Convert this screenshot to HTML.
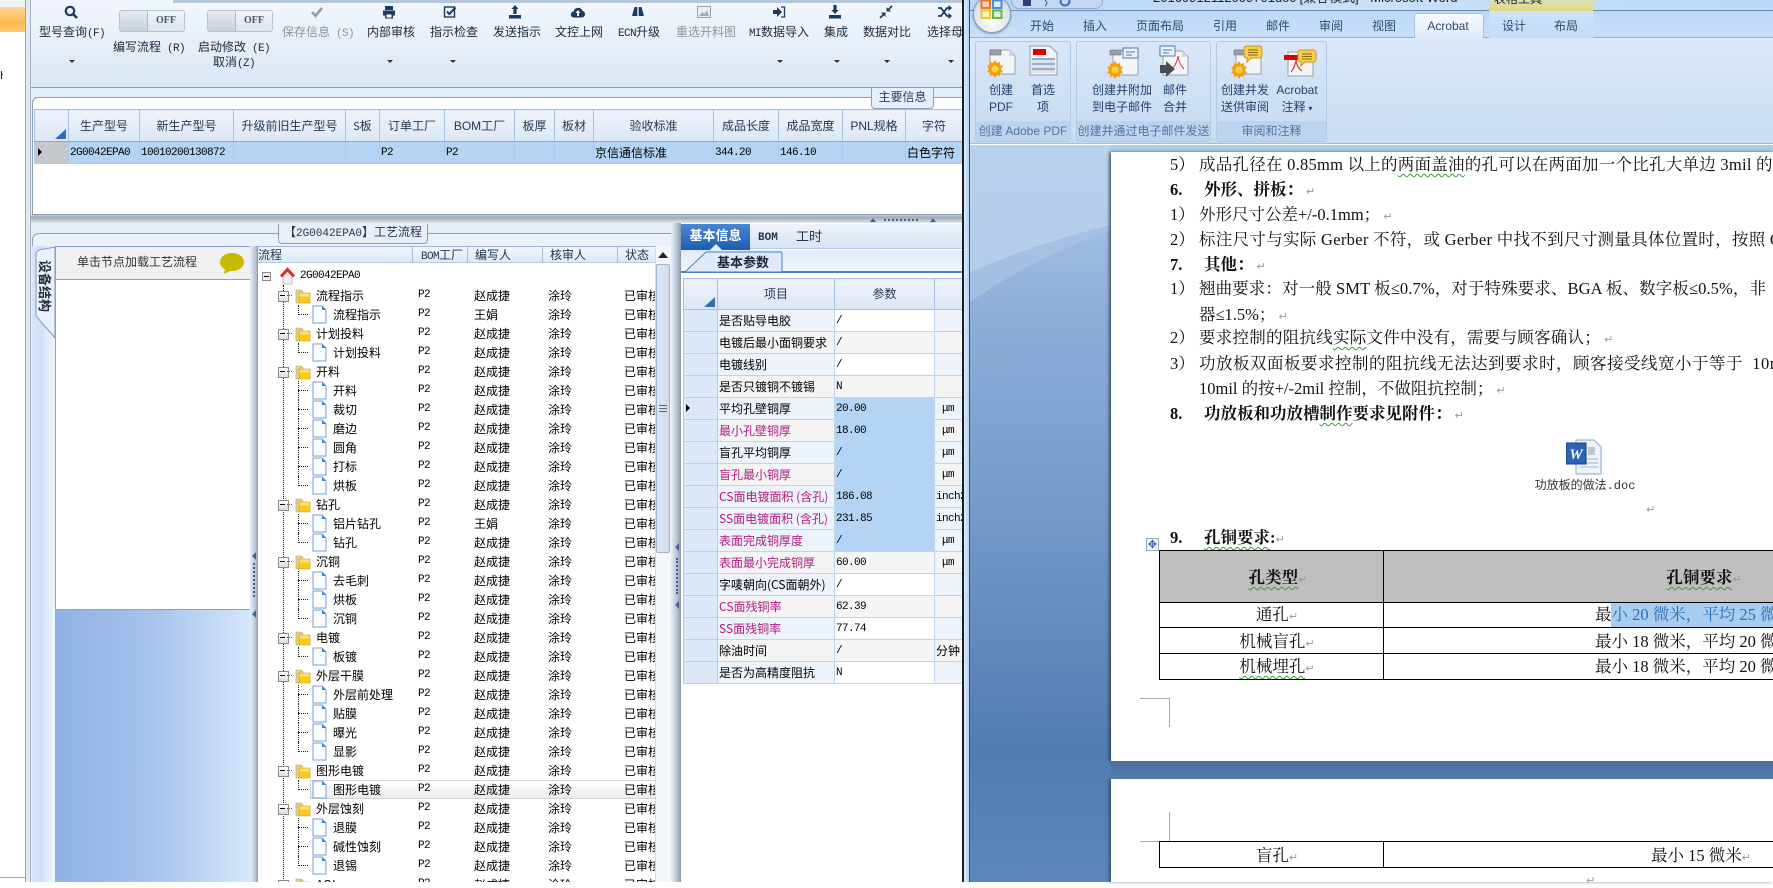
<!DOCTYPE html>
<html lang="zh"><head><meta charset="utf-8"><title>MI</title>
<style>
html,body{margin:0;padding:0}
body{position:relative;width:1773px;height:882px;overflow:hidden;background:#fff;font:12px/14px "WenQuanYi Zen Hei","Noto Sans CJK SC",sans-serif;color:#000}
div,span,svg{box-sizing:border-box}
.a{position:absolute}
.t{position:absolute;transform:translateX(-50%);white-space:nowrap;height:14px;line-height:14px;color:#1b2a3c}
.g{color:#8f959c}
.m{font-family:"Liberation Mono",monospace;font-size:11px;letter-spacing:-.6px}
.ar{position:absolute;top:60px;width:0;height:0;border:3px solid transparent;border-top:3px solid #333;border-bottom:0}
.sw{position:absolute;top:10px;width:66px;height:22px;border:1px solid #b4c4d6;border-radius:3px;background:linear-gradient(#eef3f8,#dbe5f0);font:bold 10px/20px "Liberation Serif",serif;color:#4a5a6a;text-align:right;padding-right:8px}
.sw i{position:absolute;left:0;top:0;width:27px;height:20px;background:linear-gradient(#e4e9ee,#c8d2dc);border-right:1px solid #a9b9c9;border-radius:2px}
.ti{position:absolute;top:5px;width:14px;height:14px;overflow:visible}
table{border-collapse:collapse;table-layout:fixed;position:absolute;font-size:12px}
td,th{border:1px solid #c2d4ea;padding:0;white-space:nowrap;overflow:hidden;font-weight:normal}
#g1 th{height:31px;background:linear-gradient(#edf3fb,#dbe7f6);text-align:center;color:#2a3a4c;border-color:#a7c0de;border-bottom-color:#8eaacd}
#g1 td{height:21px;background:#b3d4f4;border-color:#a8cbee;padding-left:1px}
#g2 th{height:30px;background:linear-gradient(#edf3fb,#dbe7f6);text-align:center;color:#2a3a4c;border-color:#a7c0de}
#g2 td{height:21px;padding-left:1px}
#g2 td:first-child{background:#dce8f7;border-color:#b7cce6}
.k{background:#edf3fb}.x{background:#f4f4f4}
.w{background:#fff}.y{background:#f5f5f5}.s{background:#b3d4f4}.z{background:#f2f2f2}.q{background:#edf3fb}
.v{color:#b01c80}
.tree{position:absolute;left:258px;top:263px;width:397px;height:619px;background:#fff;overflow:hidden;padding-top:4px}
.r{position:relative;height:19px;line-height:19px;white-space:nowrap}
.r span{position:absolute;top:0}
.r .n1{left:160px;font:11px/19px "Liberation Mono",monospace;letter-spacing:-.6px}.r .n2{left:216px}.r .n3{left:290px}.r .n4{left:366px}
.f .lb{left:58px}.d .lb{left:75px}
.f svg{position:absolute;left:37px;top:1px;width:16px;height:17px}
.d svg{position:absolute;left:54px;top:0;width:15px;height:19px}
.f .b{position:absolute;left:20px;top:5px;width:9px;height:9px;border:1px solid #8a8a8a;background:linear-gradient(#fff,#ddd)}
.f .b:after{content:"";position:absolute;left:1px;top:3px;width:5px;height:1px;background:#000}
.f .h{position:absolute;left:29px;top:9px;width:5px;border-top:1px dotted #555}
.d .c{position:absolute;left:40px;top:0;height:19px;border-left:1px dotted #222}
.d .e{position:absolute;left:40px;top:9px;width:10px;border-top:1px dotted #222}
.l .c{height:10px}
.hl{background:linear-gradient(#fff,#ebebeb)}
.wt{position:absolute;white-space:nowrap;font:16.5px/22px "Liberation Serif","Noto Serif CJK SC",serif;color:#111}
.wb{font-weight:bold}
.ls{letter-spacing:.25px}
.p{color:#999;font:11px/14px "DejaVu Sans",sans-serif;margin-left:3px}
.tp{margin-left:0}
.sq{text-decoration:underline wavy #3a9a3a 1px;text-underline-offset:3px}
.tab{position:absolute;top:19px;transform:translateX(-50%);white-space:nowrap;line-height:14px;color:#2c4a73}
.rg{position:absolute;top:41px;height:101px;border:1px solid #b3cae6;border-radius:3px;background:linear-gradient(#d9e7f8,#c6daf1)}
.rg b{position:absolute;left:0;right:0;bottom:0;height:20px;background:#bdd4ef;font-weight:normal;text-align:center;line-height:20px;color:#55749e;white-space:nowrap;overflow:hidden}
.rt{position:absolute;transform:translateX(-50%);white-space:nowrap;line-height:14px;color:#24426b}
.rl{position:absolute;background:#aaa}
</style></head><body>

<!-- far left window -->
<div class="a" style="left:0;top:0;width:25px;height:882px;background:#fff"></div>
<div class="a" style="left:0;top:0;width:25px;height:7px;background:#eef0f2"></div>
<div class="a" style="left:0;top:7px;width:25px;height:25px;background:linear-gradient(#ffd79a,#fdb94f 60%,#ffc873)"></div>
<div class="a" style="left:0;top:70px;font-size:10px;line-height:10px;width:3px;overflow:hidden">h</div>
<div class="a" style="left:0;top:877px;width:25px;height:1px;background:#9aa"></div>
<div class="a" style="left:25px;top:0;width:6px;height:882px;background:#e3e8ef;border-left:1px solid #99a8b8;border-right:1px solid #a6b5c6"></div>

<!-- toolbar -->
<div class="a" style="left:31px;top:0;width:932px;height:88px;background:linear-gradient(#f2f6fc,#e8f0fa 40%,#dbe7f5);border-bottom:1px solid #8c9aa9;overflow:hidden">
<div class="a" style="left:142px;top:0;right:0;height:3px;background:#b4c6dc"></div>
</div>
<svg class="ti" style="left:64px" viewBox="0 0 14 14"><circle cx="6" cy="6" r="4.2" fill="none" stroke="#1c3a5e" stroke-width="2.2"/><path d="M9 9l4 4" stroke="#1c3a5e" stroke-width="2.6"/></svg>
<div class="t" style="left:72px;top:25px">型号查询<span class="m">(F)</span></div><div class="ar" style="left:69px"></div>
<div class="sw" style="left:119px"><i></i>OFF</div>
<div class="t" style="left:149px;top:40px">编写流程<span class="m"> (R)</span></div>
<div class="sw" style="left:207px"><i></i>OFF</div>
<div class="t" style="left:234px;top:40px">启动修改<span class="m"> (E)</span></div>
<div class="t" style="left:234px;top:55px">取消<span class="m">(Z)</span></div>
<svg class="ti" style="left:310px" viewBox="0 0 14 14"><path d="M2 7l3.5 4L12 3" fill="none" stroke="#9a9fa6" stroke-width="2.6"/></svg>
<div class="t g" style="left:318px;top:25px">保存信息<span class="m"> (S)</span></div>
<svg class="ti" style="left:382px" viewBox="0 0 14 14"><path d="M3 1h8v4H3zM1 5.5h12v5H11v3H3v-3H1z" fill="#1c3a5e"/><path d="M4.5 9.5h5v3h-5z" fill="#fff"/></svg>
<div class="t" style="left:391px;top:25px">内部审核</div><div class="ar" style="left:387px"></div>
<svg class="ti" style="left:443px" viewBox="0 0 14 14"><rect x="1.5" y="2" width="10" height="10" fill="none" stroke="#1c3a5e" stroke-width="1.4"/><path d="M4 6.5l2.3 2.5L12.500 2.500" fill="none" stroke="#1c3a5e" stroke-width="2"/></svg>
<div class="t" style="left:454px;top:25px">指示检查</div><div class="ar" style="left:450px"></div>
<svg class="ti" style="left:508px" viewBox="0 0 14 14"><path d="M7 0l3.5 4H8.6v5H5.4V4H3.5zM1 10h12v3.5H1z" fill="#1c3a5e"/></svg>
<div class="t" style="left:517px;top:25px">发送指示</div>
<svg class="ti" style="left:571px" viewBox="0 0 14 14"><path d="M3 12.5a3 3 0 0 1-.4-6A4.6 4.6 0 0 1 11.4 5.8 3.4 3.4 0 0 1 11 12.5z" fill="#1c3a5e"/><path d="M7 5l2.5 3H8v3H6V8H4.5z" fill="#fff"/></svg>
<div class="t" style="left:579px;top:25px">文控上网</div>
<svg class="ti" style="left:631px" viewBox="0 0 14 14"><path d="M3.500 2h2.800v9H1zM7.700 2h2.800L13 11H7.700z" fill="#1c3a5e"/></svg>
<div class="t" style="left:639px;top:25px"><span class="m">ECN</span>升级</div>
<svg class="ti" style="left:697px" viewBox="0 0 14 14"><rect x=".5" y="1.500" width="13" height="11" fill="#eceef0" stroke="#9aa0a6"/><path d="M2 11l3.500-4 2 2 2.500-3.500L12 11z" fill="#a5abb1"/></svg>
<div class="t g" style="left:706px;top:25px">重选开料图</div>
<svg class="ti" style="left:772px" viewBox="0 0 14 14"><path d="M1 5h4V2l5 5-5 5V9H1z" fill="#1c3a5e"/><path d="M9 2h3.500v10H9" fill="none" stroke="#1c3a5e" stroke-width="1.300"/></svg>
<div class="t" style="left:779px;top:25px"><span class="m">MI</span>数据导入</div><div class="ar" style="left:777px"></div>
<svg class="ti" style="left:828px" viewBox="0 0 14 14"><path d="M5.400 0h3.200v5h2L7 9 3.400 5h2zM1 10h12v3.500H1z" fill="#1c3a5e"/></svg>
<div class="t" style="left:836px;top:25px">集成</div><div class="ar" style="left:834px"></div>
<svg class="ti" style="left:879px" viewBox="0 0 14 14"><path d="M13 1L8.500 5.500M1 13l4.500-4.500" stroke="#1c3a5e" stroke-width="1.800"/><path d="M7.500 2v4.500H12zM2 7.500h4.500V12z" fill="#1c3a5e"/></svg>
<div class="t" style="left:887px;top:25px">数据对比</div><div class="ar" style="left:884px"></div>
<svg class="ti" style="left:938px" viewBox="0 0 14 14"><path d="M0 3h3l6 8h2M0 11h3l6-8h2" fill="none" stroke="#1c3a5e" stroke-width="1.800"/><path d="M10.500 0l3.500 3-3.500 3zM10.500 8l3.500 3-3.500 3z" fill="#1c3a5e"/></svg>
<div class="a" style="left:927px;top:25px;width:36px;overflow:hidden;white-space:nowrap;line-height:14px;color:#1b2a3c">选择母版</div><div class="ar" style="left:948px"></div>

<!-- main info group -->
<div class="a" style="left:31px;top:88px;width:932px;height:127px;background:#e4edf8"></div>
<div class="a" style="left:32px;top:97px;width:931px;height:118px;background:#fff;border:1px solid #8ea0b6;border-right:0;border-radius:6px 0 0 0"></div>
<div class="a" style="left:871px;top:88px;width:63px;height:21px;background:#e6eef9;border:1px solid #8ea0b6;border-top:0;border-radius:0 0 4px 4px;text-align:center;line-height:17px;color:#2c3e55">主要信息</div>
<table id="g1" style="left:34px;top:109px;width:929px">
<colgroup><col style="width:34px"><col style="width:71px"><col style="width:94px"><col style="width:112px"><col style="width:34px"><col style="width:65px"><col style="width:70px"><col style="width:40px"><col style="width:39px"><col style="width:120px"><col style="width:65px"><col style="width:64px"><col style="width:63px"><col style="width:57px"></colgroup>
<tr><th></th><th>生产型号</th><th>新生产型号</th><th>升级前旧生产型号</th><th><span style="font-size:11px">S</span>板</th><th>订单工厂</th><th><span style="font-family:'Liberation Sans'">BOM</span>工厂</th><th>板厚</th><th>板材</th><th>验收标准</th><th>成品长度</th><th>成品宽度</th><th><span style="font-family:'Liberation Sans'">PNL</span>规格</th><th>字符</th></tr>
<tr><td style="background:#c4c8cd"></td><td class="m">2G0042EPA0</td><td class="m">10010200130872</td><td></td><td></td><td class="m">P2</td><td class="m">P2</td><td></td><td></td><td>京信通信标准</td><td class="m">344.20</td><td class="m">146.10</td><td></td><td>白色字符</td></tr>
</table>
<svg class="a" style="left:54px;top:128px;width:13px;height:12px" viewBox="0 0 13 12"><path d="M12 1v10H1z" fill="#2f6fb8"/></svg>
<svg class="a" style="left:38px;top:148px;width:5px;height:8px" viewBox="0 0 5 8"><path d="M0 0l4 4-4 4z" fill="#000"/></svg>

<!-- splitter -->
<div class="a" style="left:31px;top:215px;width:932px;height:8px;background:linear-gradient(#c9cfd6,#9fa9b4 30%,#dde6f1)"></div>
<div class="a" style="left:884px;top:219px;width:34px;border-top:2px dotted #3f5f8a"></div>
<svg class="a" style="left:870px;top:218px;width:66px;height:5px" viewBox="0 0 66 5"><path d="M3 0l3 4H0zM63 0l3 4h-6z" fill="#3f6496"/></svg>

<!-- process flow group -->
<div class="a" style="left:31px;top:223px;width:650px;height:659px;background:#e4edf8"></div>
<div class="a" style="left:32px;top:233px;width:649px;height:649px;background:#eaf1fa;border:1px solid #8ea0b6;border-bottom:0;border-radius:7px 7px 0 0"></div>
<div class="a" style="left:278px;top:224px;width:150px;height:20px;background:#e6eef9;border:1px solid #8ea0b6;border-top:0;border-radius:0 0 4px 4px;text-align:center;line-height:15px;color:#24364e;white-space:nowrap">【<span class="m" style="letter-spacing:0">2G0042EPA0</span>】工艺流程</div>

<!-- left rail + tab -->
<div class="a" style="left:32px;top:246px;width:23px;height:636px;background:linear-gradient(90deg,#d7e5f9,#cfe0f8 40%,#f2f7fe)"></div>
<svg class="a" style="left:35px;top:246px;width:21px;height:95px" viewBox="0 0 21 95"><path d="M20 1L4 4Q1 5 1 9V70L20 92z" fill="#e9f1fb" stroke="#7f9ac0"/></svg>
<div class="a" style="left:38px;top:260px;width:14px;height:56px;font-weight:bold;font-size:13px;line-height:14px;color:#1f2e40;writing-mode:vertical-rl;text-orientation:sideways;white-space:nowrap">设备结构</div>
<div class="a" style="left:55px;top:246px;width:195px;height:636px;background:linear-gradient(90deg,#8fb1e4,#a7c3ec 50%,#d6e6fb)"></div>
<div class="a" style="left:55px;top:246px;width:195px;height:34px;background:#f0f0f0;border-top:1px solid #8aa4c8;border-bottom:1px solid #8aa4c8;border-left:1px solid #8aa4c8"></div>
<div class="a" style="left:55px;top:280px;width:195px;height:330px;background:#fff;border-bottom:1px solid #8aa4c8;border-left:1px solid #8aa4c8"></div>
<div class="a" style="left:77px;top:255px;white-space:nowrap;color:#333">单击节点加载工艺流程</div>
<svg class="a" style="left:219px;top:253px;width:26px;height:21px" viewBox="0 0 26 21"><ellipse cx="13" cy="9" rx="12" ry="9" fill="#c8ba00"/><path d="M6 15L5 21l8-4z" fill="#c8ba00"/></svg>

<!-- vertical splitter 1 -->
<div class="a" style="left:250px;top:246px;width:8px;height:636px;background:linear-gradient(90deg,#e6eef8,#b7c4d4 70%,#8a98a8)"></div>
<div class="a" style="left:253px;top:563px;height:34px;border-left:2px dotted #3f5f8a"></div>
<svg class="a" style="left:252px;top:552px;width:5px;height:66px" viewBox="0 0 5 66"><path d="M4 0v8L0 4zM4 58v8L0 62z" fill="#3f6496"/></svg>

<!-- tree grid header -->
<div class="a" style="left:258px;top:246px;width:397px;height:17px;background:linear-gradient(#f1f6fc,#dde9f7);border-top:1px solid #9db6d5;border-bottom:1px solid #b5cae4;color:#24364e;line-height:16px">
<span class="a" style="left:0;top:0">流程</span>
<span class="a" style="left:154px;top:0;width:1px;height:16px;background:#a7bcd6"></span><span class="a" style="left:163px;top:0;white-space:nowrap"><span class="m">BOM</span>工厂</span>
<span class="a" style="left:209px;top:0;width:1px;height:16px;background:#a7bcd6"></span><span class="a" style="left:217px;top:0">编写人</span>
<span class="a" style="left:284px;top:0;width:1px;height:16px;background:#a7bcd6"></span><span class="a" style="left:292px;top:0">核审人</span>
<span class="a" style="left:359px;top:0;width:1px;height:16px;background:#a7bcd6"></span><span class="a" style="left:367px;top:0">状态</span>
</div>
<!-- scrollbar -->
<div class="a" style="left:655px;top:246px;width:16px;height:636px;background:#f3f7fb;border-left:1px solid #d0dcea"></div>
<svg class="a" style="left:658px;top:252px;width:10px;height:6px" viewBox="0 0 10 6"><path d="M5 0l5 6H0z" fill="#222"/></svg>
<div class="a" style="left:656px;top:264px;width:14px;height:289px;background:linear-gradient(90deg,#dbe7f5,#cfdced);border:1px solid #9fb4cd;border-radius:2px"></div>
<div class="a" style="left:659px;top:405px;width:8px;height:7px;border-top:1px solid #667;border-bottom:1px solid #667"><div style="margin-top:2px;border-top:1px solid #667"></div></div>

<svg width="0" height="0" style="position:absolute"><defs>
<symbol id="fo" viewBox="0 0 16 17"><path d="M1 3h5l2 2h-3v11H1z" fill="#e8d488" stroke="#b39a4a" stroke-width=".6"/><path d="M4 6h11v10H4z" fill="#ffc91a" stroke="#c79a1c" stroke-width=".6"/><path d="M4.500 6.500h10v3h-10z" fill="#ffe27a"/></symbol>
<symbol id="dc" viewBox="0 0 15 19"><path d="M1 1h9l4 4v13H1z" fill="#fbfdff" stroke="#6f9fd8"/><path d="M10 1v4h4z" fill="#3f85d8"/></symbol>
</defs></svg>

<div class="tree">
<div class="a" style="left:25px;top:22px;height:610px;border-left:1px dotted #111"></div>
<div class="r" style="position:relative"><span class="b" style="position:absolute;left:4px;top:5px;width:9px;height:9px;border:1px solid #8a8a8a;background:#eee"></span><span style="left:6px;top:9px;width:5px;height:1px;background:#000"></span><svg style="position:absolute;left:22px;top:0;width:15px;height:18px" viewBox="0 0 15 18"><path d="M3 9v8h9V9L7.500 4z" fill="#eef0f3" stroke="#a8aeb6" stroke-width=".8"/><path d="M1 9.500L7.500 2.500 14 9.500" fill="none" stroke="#d92f2f" stroke-width="3"/></svg><span class="m" style="left:42px;line-height:19px">2G0042EPA0</span></div>
<div class="r f"><i class="b"></i><i class="h"></i><svg><use href="#fo"/></svg><span class="lb">流程指示</span><span class="n1">P2</span><span class="n2">赵成捷</span><span class="n3">涂玲</span><span class="n4">已审核</span></div>
<div class="r d l"><i class="c"></i><i class="e"></i><svg><use href="#dc"/></svg><span class="lb">流程指示</span><span class="n1">P2</span><span class="n2">王娟</span><span class="n3">涂玲</span><span class="n4">已审核</span></div>
<div class="r f"><i class="b"></i><i class="h"></i><svg><use href="#fo"/></svg><span class="lb">计划投料</span><span class="n1">P2</span><span class="n2">赵成捷</span><span class="n3">涂玲</span><span class="n4">已审核</span></div>
<div class="r d l"><i class="c"></i><i class="e"></i><svg><use href="#dc"/></svg><span class="lb">计划投料</span><span class="n1">P2</span><span class="n2">赵成捷</span><span class="n3">涂玲</span><span class="n4">已审核</span></div>
<div class="r f"><i class="b"></i><i class="h"></i><svg><use href="#fo"/></svg><span class="lb">开料</span><span class="n1">P2</span><span class="n2">赵成捷</span><span class="n3">涂玲</span><span class="n4">已审核</span></div>
<div class="r d"><i class="c"></i><i class="e"></i><svg><use href="#dc"/></svg><span class="lb">开料</span><span class="n1">P2</span><span class="n2">赵成捷</span><span class="n3">涂玲</span><span class="n4">已审核</span></div>
<div class="r d"><i class="c"></i><i class="e"></i><svg><use href="#dc"/></svg><span class="lb">裁切</span><span class="n1">P2</span><span class="n2">赵成捷</span><span class="n3">涂玲</span><span class="n4">已审核</span></div>
<div class="r d"><i class="c"></i><i class="e"></i><svg><use href="#dc"/></svg><span class="lb">磨边</span><span class="n1">P2</span><span class="n2">赵成捷</span><span class="n3">涂玲</span><span class="n4">已审核</span></div>
<div class="r d"><i class="c"></i><i class="e"></i><svg><use href="#dc"/></svg><span class="lb">圆角</span><span class="n1">P2</span><span class="n2">赵成捷</span><span class="n3">涂玲</span><span class="n4">已审核</span></div>
<div class="r d"><i class="c"></i><i class="e"></i><svg><use href="#dc"/></svg><span class="lb">打标</span><span class="n1">P2</span><span class="n2">赵成捷</span><span class="n3">涂玲</span><span class="n4">已审核</span></div>
<div class="r d l"><i class="c"></i><i class="e"></i><svg><use href="#dc"/></svg><span class="lb">烘板</span><span class="n1">P2</span><span class="n2">赵成捷</span><span class="n3">涂玲</span><span class="n4">已审核</span></div>
<div class="r f"><i class="b"></i><i class="h"></i><svg><use href="#fo"/></svg><span class="lb">钻孔</span><span class="n1">P2</span><span class="n2">赵成捷</span><span class="n3">涂玲</span><span class="n4">已审核</span></div>
<div class="r d"><i class="c"></i><i class="e"></i><svg><use href="#dc"/></svg><span class="lb">铝片钻孔</span><span class="n1">P2</span><span class="n2">王娟</span><span class="n3">涂玲</span><span class="n4">已审核</span></div>
<div class="r d l"><i class="c"></i><i class="e"></i><svg><use href="#dc"/></svg><span class="lb">钻孔</span><span class="n1">P2</span><span class="n2">赵成捷</span><span class="n3">涂玲</span><span class="n4">已审核</span></div>
<div class="r f"><i class="b"></i><i class="h"></i><svg><use href="#fo"/></svg><span class="lb">沉铜</span><span class="n1">P2</span><span class="n2">赵成捷</span><span class="n3">涂玲</span><span class="n4">已审核</span></div>
<div class="r d"><i class="c"></i><i class="e"></i><svg><use href="#dc"/></svg><span class="lb">去毛刺</span><span class="n1">P2</span><span class="n2">赵成捷</span><span class="n3">涂玲</span><span class="n4">已审核</span></div>
<div class="r d"><i class="c"></i><i class="e"></i><svg><use href="#dc"/></svg><span class="lb">烘板</span><span class="n1">P2</span><span class="n2">赵成捷</span><span class="n3">涂玲</span><span class="n4">已审核</span></div>
<div class="r d l"><i class="c"></i><i class="e"></i><svg><use href="#dc"/></svg><span class="lb">沉铜</span><span class="n1">P2</span><span class="n2">赵成捷</span><span class="n3">涂玲</span><span class="n4">已审核</span></div>
<div class="r f"><i class="b"></i><i class="h"></i><svg><use href="#fo"/></svg><span class="lb">电镀</span><span class="n1">P2</span><span class="n2">赵成捷</span><span class="n3">涂玲</span><span class="n4">已审核</span></div>
<div class="r d l"><i class="c"></i><i class="e"></i><svg><use href="#dc"/></svg><span class="lb">板镀</span><span class="n1">P2</span><span class="n2">赵成捷</span><span class="n3">涂玲</span><span class="n4">已审核</span></div>
<div class="r f"><i class="b"></i><i class="h"></i><svg><use href="#fo"/></svg><span class="lb">外层干膜</span><span class="n1">P2</span><span class="n2">赵成捷</span><span class="n3">涂玲</span><span class="n4">已审核</span></div>
<div class="r d"><i class="c"></i><i class="e"></i><svg><use href="#dc"/></svg><span class="lb">外层前处理</span><span class="n1">P2</span><span class="n2">赵成捷</span><span class="n3">涂玲</span><span class="n4">已审核</span></div>
<div class="r d"><i class="c"></i><i class="e"></i><svg><use href="#dc"/></svg><span class="lb">贴膜</span><span class="n1">P2</span><span class="n2">赵成捷</span><span class="n3">涂玲</span><span class="n4">已审核</span></div>
<div class="r d"><i class="c"></i><i class="e"></i><svg><use href="#dc"/></svg><span class="lb">曝光</span><span class="n1">P2</span><span class="n2">赵成捷</span><span class="n3">涂玲</span><span class="n4">已审核</span></div>
<div class="r d l"><i class="c"></i><i class="e"></i><svg><use href="#dc"/></svg><span class="lb">显影</span><span class="n1">P2</span><span class="n2">赵成捷</span><span class="n3">涂玲</span><span class="n4">已审核</span></div>
<div class="r f"><i class="b"></i><i class="h"></i><svg><use href="#fo"/></svg><span class="lb">图形电镀</span><span class="n1">P2</span><span class="n2">赵成捷</span><span class="n3">涂玲</span><span class="n4">已审核</span></div>
<div class="r d l"><div class="a hl" style="left:52px;top:0;width:345px;height:19px;border:1px solid #d4d4d4;border-right:0"></div><i class="c"></i><i class="e"></i><svg><use href="#dc"/></svg><span class="lb">图形电镀</span><span class="n1">P2</span><span class="n2">赵成捷</span><span class="n3">涂玲</span><span class="n4">已审核</span></div>
<div class="r f"><i class="b"></i><i class="h"></i><svg><use href="#fo"/></svg><span class="lb">外层蚀刻</span><span class="n1">P2</span><span class="n2">赵成捷</span><span class="n3">涂玲</span><span class="n4">已审核</span></div>
<div class="r d"><i class="c"></i><i class="e"></i><svg><use href="#dc"/></svg><span class="lb">退膜</span><span class="n1">P2</span><span class="n2">赵成捷</span><span class="n3">涂玲</span><span class="n4">已审核</span></div>
<div class="r d"><i class="c"></i><i class="e"></i><svg><use href="#dc"/></svg><span class="lb">碱性蚀刻</span><span class="n1">P2</span><span class="n2">赵成捷</span><span class="n3">涂玲</span><span class="n4">已审核</span></div>
<div class="r d l"><i class="c"></i><i class="e"></i><svg><use href="#dc"/></svg><span class="lb">退锡</span><span class="n1">P2</span><span class="n2">赵成捷</span><span class="n3">涂玲</span><span class="n4">已审核</span></div>
<div class="r f"><i class="b"></i><i class="h"></i><svg><use href="#fo"/></svg><span class="lb">AOI</span><span class="n1">P2</span><span class="n2">赵成捷</span><span class="n3">涂玲</span><span class="n4">已审核</span></div>
</div>

<!-- vertical splitter 2 -->
<div class="a" style="left:671px;top:223px;width:10px;height:659px;background:linear-gradient(90deg,#e6eef8,#b7c4d4 60%,#8a98a8)"></div>
<div class="a" style="left:676px;top:558px;height:36px;border-left:2px dotted #3f5f8a"></div>
<svg class="a" style="left:675px;top:543px;width:5px;height:66px" viewBox="0 0 5 66"><path d="M4 0v8L0 4zM4 58v8L0 62z" fill="#3f6496"/></svg>

<!-- right info panel -->
<div class="a" style="left:681px;top:223px;width:282px;height:659px;background:#fff"></div>
<div class="a" style="left:681px;top:224px;width:282px;height:25px;background:linear-gradient(#edf3fb,#d7e4f4);border-bottom:1px solid #b7cbe4"></div>
<div class="a" style="left:681px;top:224px;width:69px;height:26px;background:linear-gradient(#4787d6,#1f5cb0);color:#fff;font-weight:bold;text-align:center;line-height:22px;font-size:13px">基本信息</div>
<svg class="a" style="left:710px;top:244px;width:12px;height:6px" viewBox="0 0 12 6"><path d="M6 0l6 6H0z" fill="#e8f0fa"/></svg>
<div class="a m" style="left:758px;top:232px;font-weight:bold;line-height:12px;color:#22344a;letter-spacing:0">BOM</div>
<div class="a" style="left:796px;top:229px;color:#22344a;font-size:13px">工时</div>
<div class="a" style="left:681px;top:250px;width:282px;height:23px;background:linear-gradient(#dfeaf8,#f0f5fc);border-bottom:2px solid #4f81bd"></div>
<svg class="a" style="left:684px;top:251px;width:100px;height:22px" viewBox="0 0 100 22"><path d="M1 21L22 1h74q2 0 2 2v18z" fill="#dfe9f7" stroke="#4f81bd"/></svg>
<div class="a" style="left:717px;top:255px;font-weight:bold;font-size:13px;color:#1a2738;white-space:nowrap">基本参数</div>

<table id="g2" style="left:683px;top:278px;width:280px">
<colgroup><col style="width:34px"><col style="width:117px"><col style="width:100px"><col style="width:29px"></colgroup>
<tr><th></th><th>项目</th><th>参数</th><th></th></tr>
<tr><td></td><td class="k">是否贴导电胶</td><td class="w m">/</td><td class="k"></td></tr>
<tr><td></td><td class="x">电镀后最小面铜要求</td><td class="y m">/</td><td class="x"></td></tr>
<tr><td></td><td class="k">电镀线别</td><td class="w m">/</td><td class="k"></td></tr>
<tr><td></td><td class="x">是否只镀铜不镀锡</td><td class="y m">N</td><td class="x"></td></tr>
<tr><td></td><td class="k">平均孔壁铜厚</td><td class="s m">20.00</td><td class="k m">&nbsp;μm</td></tr>
<tr><td></td><td class="x v">最小孔壁铜厚</td><td class="s m">18.00</td><td class="x m">&nbsp;μm</td></tr>
<tr><td></td><td class="k">盲孔平均铜厚</td><td class="s m">/</td><td class="k m">&nbsp;μm</td></tr>
<tr><td></td><td class="x v">盲孔最小铜厚</td><td class="s m">/</td><td class="x m">&nbsp;μm</td></tr>
<tr><td></td><td class="k v">CS面电镀面积 (含孔)</td><td class="s m">186.08</td><td class="k m">inch2</td></tr>
<tr><td></td><td class="k v">SS面电镀面积 (含孔)</td><td class="s m">231.85</td><td class="k m">inch2</td></tr>
<tr><td></td><td class="k v">表面完成铜厚度</td><td class="s m">/</td><td class="k m">&nbsp;μm</td></tr>
<tr><td></td><td class="x v">表面最小完成铜厚</td><td class="y m">60.00</td><td class="x m">&nbsp;μm</td></tr>
<tr><td></td><td class="k">字唛朝向(CS面朝外)</td><td class="w m">/</td><td class="k"></td></tr>
<tr><td></td><td class="x v">CS面残铜率</td><td class="y m">62.39</td><td class="x"></td></tr>
<tr><td></td><td class="k v">SS面残铜率</td><td class="w m">77.74</td><td class="k"></td></tr>
<tr><td></td><td class="x">除油时间</td><td class="y m">/</td><td class="x">分钟</td></tr>
<tr><td></td><td class="k">是否为高精度阻抗</td><td class="w m">N</td><td class="k"></td></tr>
</table>
<svg class="a" style="left:703px;top:296px;width:13px;height:12px" viewBox="0 0 13 12"><path d="M12 1v10H1z" fill="#2f6fb8"/></svg>
<svg class="a" style="left:686px;top:404px;width:5px;height:8px" viewBox="0 0 5 8"><path d="M0 0l4 4-4 4z" fill="#000"/></svg>

<!-- window separator -->
<div class="a" style="left:962px;top:0;width:2px;height:882px;background:#1a1f26"></div>
<div class="a" style="left:964px;top:0;width:5px;height:882px;background:linear-gradient(90deg,#dfeafb,#b6d2f2)"></div>
<div class="a" style="left:969px;top:0;width:1px;height:882px;background:#3d4d62"></div>

<!-- Word title bar + ribbon -->
<div class="a" style="left:970px;top:0;width:803px;height:11px;background:linear-gradient(90deg,#b9d6f5,#c9e0f8 50%,#bdd8f6);border-bottom:1px solid #6d8cb0"></div>
<div class="a" style="left:1011px;top:-8px;width:92px;height:17px;background:#c3d9f3;border:1px solid #8ea9c9;border-radius:8px"></div>
<svg class="a" style="left:1023px;top:0;width:60px;height:8px" viewBox="0 0 60 8"><rect x="0" y="0" width="8" height="6" fill="#2a3f70"/><path d="M22 0q4 3 0 6" stroke="#3a5fa0" fill="none"/><circle cx="42" cy="1" r="4.500" fill="none" stroke="#3a6fc0" stroke-width="2"/></svg>
<div class="a" style="left:1153px;top:-10px;white-space:nowrap;font:13px/16px 'Liberation Sans','WenQuanYi Zen Hei',sans-serif;color:#222">20160912112009701doc [兼容模式] - Microsoft Word</div>
<div class="a" style="left:1489px;top:0;width:104px;height:11px;background:linear-gradient(#d9e0bb,#e6d97a)"></div>
<div class="a" style="left:1494px;top:-8px;white-space:nowrap;line-height:14px;color:#222">表格工具</div>
<div class="a" style="left:970px;top:11px;width:803px;height:27px;background:linear-gradient(#bcd8f7,#c8dff9);border-bottom:1px solid #8db2e0"></div>
<div class="a" style="left:1489px;top:11px;width:104px;height:27px;background:linear-gradient(#cfe3fa,#c4dcf7)"></div>
<div class="a" style="left:1414px;top:13px;width:70px;height:26px;background:linear-gradient(#f8fbff,#dfeafa);border:1px solid #a5c2e4;border-bottom:0;border-radius:3px 3px 0 0"></div>
<div class="tab" style="left:1042px">开始</div><div class="tab" style="left:1095px">插入</div><div class="tab" style="left:1160px">页面布局</div><div class="tab" style="left:1225px">引用</div><div class="tab" style="left:1278px">邮件</div><div class="tab" style="left:1331px">审阅</div><div class="tab" style="left:1384px">视图</div><div class="tab" style="left:1448px;font-family:'Liberation Sans',sans-serif">Acrobat</div><div class="tab" style="left:1514px">设计</div><div class="tab" style="left:1566px">布局</div>
<div class="a" style="left:970px;top:38px;width:803px;height:106px;background:linear-gradient(#dbe8f9,#c9dcf2);border-bottom:1px solid #9fbbdc"></div>
<div class="rg" style="left:975px;width:96px"><b>创建 <span style="font-family:'Liberation Sans'">Adobe PDF</span></b></div>
<div class="rg" style="left:1076px;width:135px"><b>创建并通过电子邮件发送</b></div>
<div class="rg" style="left:1216px;width:111px"><b>审阅和注释</b></div>

<svg class="a" style="left:975px;top:44px;width:350px;height:36px" viewBox="975 44 350 36">
<defs><g id="pg"><path d="M0 0h19l6 6v18H0z" fill="#f4f5f6" stroke="#9a9fa5"/><path d="M19 0v6h6z" fill="#d5d8dc"/></g>
<g id="st"><path d="M8 0l2 3 3-1v3l3 1-2 3 2 3-3 1v3l-3-1-2 3-2-3-3 1v-3L0 12l2-3L0 6l3-1V2l3 1z" fill="#f0a010"/><circle cx="8" cy="9" r="3.500" fill="#ffd040"/></g>
<g id="tg"><rect width="11" height="5" fill="#9aa0a6" stroke="#666" stroke-width=".5"/></g>
<g id="bb"><path d="M3 0h12q3 0 3 3v6q0 3-3 3H7l-4 4v-4Q0 12 0 9V3q0-3 3-3z" fill="#f8cf4a" stroke="#c9962a"/><path d="M4 4h10M4 6.500h10M4 9h10" stroke="#8a6a10"/></g></defs>
<use href="#pg" x="990" y="50"/><use href="#tg" x="990" y="50"/><use href="#st" x="987" y="60"/>
<path d="M1030 46h20l7 7v22h-27z" fill="#f2f3f5" stroke="#9a9fa5"/><rect x="1033" y="49" width="13" height="6" fill="#e00000"/><g stroke="#5a7ea8" stroke-width="1.500"><path d="M1032 59h23M1032 64h23M1032 69h23"/></g><rect x="1031" y="58" width="24" height="15" fill="#b9cbdc" opacity=".4"/>
<use href="#pg" x="1113" y="51"/><use href="#tg" x="1110" y="50"/><use href="#st" x="1107" y="61"/><rect x="1123" y="48" width="15" height="10" fill="#eaf2fb" stroke="#4a7ab0"/><path d="M1126 52h9M1126 55h6" stroke="#4a7ab0"/>
<use href="#pg" x="1163" y="51"/><rect x="1160" y="46" width="15" height="10" fill="#eaf2fb" stroke="#4a7ab0"/><path d="M1163 50h9M1163 53h6" stroke="#4a7ab0"/><path d="M1160 65h6v-4l9 8-9 8v-4h-6z" fill="#4a4d52"/><path d="M1178 56q1 8 6 13M1178 56q-1 7-5 12" stroke="#d04040" fill="none"/>
<use href="#pg" x="1236" y="50"/><use href="#tg" x="1234" y="50"/><use href="#st" x="1231" y="61"/><use href="#bb" x="1244" y="46"/>
<use href="#pg" x="1288" y="52"/><rect x="1284" y="55" width="15" height="5" fill="#e00000"/><path d="M1296 60q1 8 6 11M1296 60q-1 7-5 12" stroke="#d04040" fill="none" stroke-width="1.200"/><use href="#bb" x="1298" y="50"/>
</svg>
<div class="rt" style="left:1001px;top:83px">创建</div><div class="rt" style="left:1001px;top:100px;font-family:'Liberation Sans'">PDF</div>
<div class="rt" style="left:1043px;top:83px">首选</div><div class="rt" style="left:1043px;top:100px">项</div>
<div class="rt" style="left:1122px;top:83px">创建并附加</div><div class="rt" style="left:1122px;top:100px">到电子邮件</div>
<div class="rt" style="left:1175px;top:83px">邮件</div><div class="rt" style="left:1175px;top:100px">合并</div>
<div class="rt" style="left:1245px;top:83px">创建并发</div><div class="rt" style="left:1245px;top:100px">送供审阅</div>
<div class="rt" style="left:1297px;top:83px;font-family:'Liberation Sans'">Acrobat</div><div class="rt" style="left:1297px;top:100px">注释 <span style="font-size:8px">▾</span></div>

<!-- Office button -->
<div class="a" style="left:973px;top:-5px;width:38px;height:38px;border-radius:50%;background:radial-gradient(circle at 50% 70%,#fff,#d5dde6 70%,#a3b2c4);border:1px solid #8b9db2;box-shadow:0 1px 2px rgba(0,0,0,.35)"></div>
<svg class="a" style="left:980px;top:-1px;width:23px;height:20px" viewBox="0 0 23 20"><rect x="1.500" y="1.500" width="8.500" height="7.500" fill="#f6d9b8" stroke="#e8742a" stroke-width="2"/><rect x="13" y="1.500" width="8.500" height="7.500" fill="#dbe9f8" stroke="#4d8fd6" stroke-width="2"/><rect x="1.500" y="11.500" width="8.500" height="7.500" fill="#f7efc2" stroke="#e8c82a" stroke-width="2"/><rect x="13" y="11.500" width="8.500" height="7.500" fill="#dcefd0" stroke="#6ab04c" stroke-width="2"/></svg>

<!-- doc workspace -->
<div class="a" style="left:970px;top:145px;width:803px;height:737px;background:linear-gradient(#aecbeb,#8bacd7 25%,#7a9ecb 45%,#527cb0 82%,#5d86bd)"></div>
<svg class="a" style="left:970px;top:145px;width:141px;height:165px" viewBox="0 0 141 165"><path d="M0 0h141v80Q60 100 0 128z" fill="#bcd4ee" opacity=".75"/><path d="M0 128Q60 100 141 80v5Q60 115 0 157z" fill="#a6c2e4" opacity=".8"/></svg>
<div class="a" style="left:1111px;top:152px;width:662px;height:609px;background:#fff;box-shadow:-2px 0 3px rgba(30,40,60,.55),0 2px 3px rgba(30,40,60,.6)"></div>
<div class="a" style="left:1111px;top:779px;width:662px;height:103px;background:#fff;box-shadow:-2px 0 3px rgba(30,40,60,.55)"></div>
<div class="a" style="left:1111px;top:761px;width:662px;height:18px;background:linear-gradient(#4a6f9f,#5679ab)"></div>

<!-- doc text -->
<div class="wt" style="left:1170px;top:154px">5）</div><div class="wt ls" style="left:1199px;top:154px">成品孔径在 0.85mm 以上的<span class="sq">两面盖油</span>的孔可以在两面加一个比孔大单边 3mil 的</div>
<div class="wt wb" style="left:1170px;top:179px">6.</div><div class="wt wb" style="left:1204px;top:179px">外形、拼板：<span class="p">↵</span></div>
<div class="wt" style="left:1170px;top:204px">1）</div><div class="wt" style="left:1199px;top:204px">外形尺寸公差+/-0.1mm；<span class="p">↵</span></div>
<div class="wt" style="left:1170px;top:229px">2）</div><div class="wt" style="left:1199px;top:229px;letter-spacing:.3px">标注尺寸与实际 Gerber 不符，或 Gerber 中找不到尺寸测量具体位置时，按照 G</div>
<div class="wt wb" style="left:1170px;top:254px">7.</div><div class="wt wb" style="left:1204px;top:254px">其他：<span class="p">↵</span></div>
<div class="wt" style="left:1170px;top:278px">1）</div><div class="wt" style="left:1199px;top:278px;letter-spacing:.1px">翘曲要求：对一般 SMT 板≤0.7%，对于特殊要求、BGA 板、数字板≤0.5%，非</div>
<div class="wt" style="left:1199px;top:304px">器≤1.5%；<span class="p">↵</span></div>
<div class="wt" style="left:1170px;top:327px">2）</div><div class="wt ls" style="left:1199px;top:327px">要求控制的阻抗线<span class="sq">实际</span>文件中没有，需要与顾客确认；<span class="p">↵</span></div>
<div class="wt" style="left:1170px;top:353px">3）</div><div class="wt" style="left:1199px;top:353px;letter-spacing:.5px">功放板双面板要求控制的阻抗线无法达到要求时，顾客接受线宽小于等于&nbsp; 10m</div>
<div class="wt" style="left:1199px;top:378px">10mil 的按+/-2mil 控制，不做阻抗控制；<span class="p">↵</span></div>
<div class="wt wb" style="left:1170px;top:403px">8.</div><div class="wt wb" style="left:1204px;top:403px">功放板和功放槽<span class="sq">制作</span>要求见附件：<span class="p">↵</span></div>

<!-- embedded doc icon -->
<svg class="a" style="left:1566px;top:439px;width:36px;height:36px" viewBox="0 0 36 36"><path d="M10 1h18l7 7v27H10z" fill="#eef3fa" stroke="#8aa6c8"/><path d="M14 20h18M14 24h18M14 28h18" stroke="#9fb4cd"/><rect x="22" y="8" width="7" height="8" fill="#b7c6d8"/><rect x="0" y="4" width="20" height="21" fill="#2c62b4" stroke="#1a3f80"/><text x="10" y="20" font-family="Liberation Serif,serif" font-size="15" font-weight="bold" font-style="italic" fill="#fff" text-anchor="middle">W</text></svg>
<div class="a" style="left:1585px;top:478px;transform:translateX(-50%);white-space:nowrap;color:#333">功放板的做法<span style="font-family:'Liberation Mono';font-size:12px">.doc</span></div>
<div class="a p" style="left:1646px;top:503px;margin:0">↵</div>

<div class="wt wb" style="left:1170px;top:527px">9.</div><div class="wt wb" style="left:1204px;top:527px"><span class="sq">孔铜要求</span>:<span class="p tp">↵</span></div>
<div class="a" style="left:1146px;top:538px;width:13px;height:13px;background:#f2f6fb;border:1px solid #9ab;color:#2a5ca8;font:11px/11px 'DejaVu Sans',sans-serif;text-align:center">✥</div>

<!-- doc table 1 -->
<div class="a" style="left:1159px;top:550px;width:620px;height:130px;border:1px solid #000"></div>
<div class="a" style="left:1160px;top:551px;width:613px;height:51px;background:#bfbfbf"></div>
<div class="a" style="left:1611px;top:603px;width:162px;height:24px;background:#a8cdf1"></div>
<div class="a" style="left:1159px;top:602px;width:620px;height:1px;background:#000"></div>
<div class="a" style="left:1159px;top:627px;width:620px;height:1px;background:#000"></div>
<div class="a" style="left:1159px;top:653px;width:620px;height:1px;background:#000"></div>
<div class="a" style="left:1383px;top:550px;width:1px;height:130px;background:#000"></div>
<div class="wt wb" style="left:1278px;top:567px;transform:translateX(-50%)"><span class="sq">孔类型</span><span class="p tp">↵</span></div>
<div class="wt wb" style="left:1704px;top:567px;transform:translateX(-50%)"><span class="sq">孔铜要求</span><span class="p tp">↵</span></div>
<div class="wt" style="left:1277px;top:604px;transform:translateX(-50%)">通孔<span class="p tp">↵</span></div>
<div class="wt" style="left:1277px;top:631px;transform:translateX(-50%)">机械盲孔<span class="p tp">↵</span></div>
<div class="wt" style="left:1277px;top:656px;transform:translateX(-50%)"><span class="sq">机械埋孔</span><span class="p tp">↵</span></div>
<div class="wt" style="left:1595px;top:604px">最<span style="color:#2f6db5">小 20 微米，平均 25 微</span></div>
<div class="wt" style="left:1595px;top:631px">最小 18 微米，平均 20 微</div>
<div class="wt" style="left:1595px;top:656px">最小 18 微米，平均 20 微</div>

<!-- crop marks -->
<div class="rl" style="left:1140px;top:698px;width:30px;height:1px"></div><div class="rl" style="left:1169px;top:698px;width:1px;height:29px"></div>
<div class="rl" style="left:1169px;top:812px;width:1px;height:29px"></div><div class="rl" style="left:1140px;top:841px;width:30px;height:1px"></div>

<!-- doc table 2 -->
<div class="a" style="left:1159px;top:841px;width:620px;height:27px;border:1px solid #000"></div>
<div class="a" style="left:1383px;top:841px;width:1px;height:27px;background:#000"></div>
<div class="wt" style="left:1277px;top:845px;transform:translateX(-50%)">盲孔<span class="p tp">↵</span></div>
<div class="wt" style="left:1651px;top:845px">最小 15 微米<span class="p tp">↵</span></div>
<div class="a p" style="left:1586px;top:874px;margin:0">↵</div>

</body></html>
